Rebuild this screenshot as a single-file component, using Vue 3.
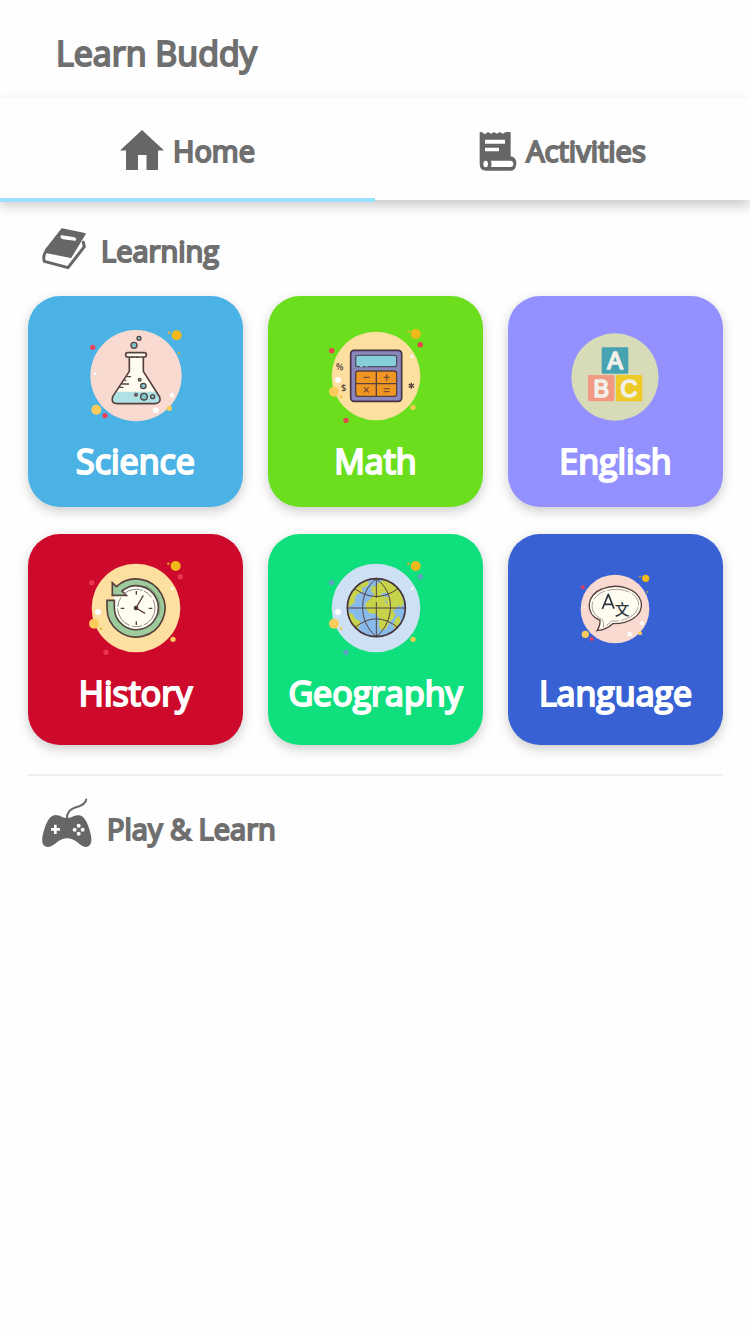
<script setup>
import { ref } from 'vue'

const tab = ref('home')
const subjects = [
  { id: 'science', name: 'Science' },
  { id: 'math', name: 'Math' },
  { id: 'english', name: 'English' },
  { id: 'history', name: 'History' },
  { id: 'geography', name: 'Geography' },
  { id: 'language', name: 'Language' },
]
</script>

<template>
  <div class="app">
    <header class="top"><h1>Learn Buddy</h1></header>

    <nav class="tabs">
      <button type="button" class="tab" :class="{ active: tab === 'home' }" @click="tab = 'home'">
        <svg class="tab-icon home" viewBox="0 0 44 40" aria-hidden="true">
          <path d="M22 0 L44 20.500 H38 V40 H26.500 V25 H18 V40 H6 V20.500 H0 Z" fill="#666" />
        </svg>
        <span>Home</span>
      </button>
      <button type="button" class="tab" :class="{ active: tab === 'activities' }" @click="tab = 'activities'">
        <svg class="tab-icon scroll" viewBox="0 0 114 120" aria-hidden="true">
          <path d="M2 4 L8 3 Q10 3 12 6 Q15 9 19 9 Q23 8 25 4 Q30 3 32 6 Q37 11 43 4 Q47 3 49 5 Q54 11 60 4 Q64 3 67 5 Q71 10 76 5 Q79 3 83 3 L95 3 V76 Q112 78 112 98 Q110 119 96 119 H22 Q2 119 2 98 Z" fill="#666" />
          <path d="M18 26 H78 V38 H18 Z M18 50 H60 V61 H18 Z" fill="#fefefe" />
          <ellipse cx="20" cy="99" rx="7" ry="10" fill="#fefefe" />
          <path d="M36 89 H94 Q103 90 103 99 Q103 108 94 108 H36 Q39 99 36 89 Z" fill="#fefefe" />
        </svg>
        <span>Activities</span>
      </button>
    </nav>

    <main>
      <section>
        <h2 class="heading">
          <svg class="book" viewBox="0 0 132 126" aria-hidden="true">
            <path d="M60 4 L128 18 L86 87 L12 72 Q10 66 16 60 Z" fill="#666" stroke="#666" stroke-width="6" stroke-linejoin="round" />
            <path d="M58 23 L98 29 Q104 32 100 37 L62 32 Q53 28 58 23 Z" fill="#fefefe" stroke="#fefefe" stroke-width="3" />
            <path d="M12 70 Q2 84 7 100 L78 119 L127 56 L124 43" fill="none" stroke="#666" stroke-width="9" stroke-linejoin="round" stroke-linecap="round" />
          </svg>
          <span>Learning</span>
        </h2>

        <div class="grid">
          <button v-for="s in subjects" :key="s.id" type="button" class="card" :class="s.id">
            <svg v-if="s.id === 'science'" class="art" viewBox="0 0 360 330" aria-hidden="true">
              <circle cx="180" cy="167" r="137" fill="#f9dad1" />
              <circle cx="302" cy="46" r="15" fill="#f0b818" /><circle cx="280" cy="38" r="4" fill="#d7b13c" />
              <circle cx="309" cy="100" r="4" fill="#b8b35a" /><circle cx="50" cy="82" r="8" fill="#e9425f" />
              <circle cx="61" cy="269" r="15" fill="#fccb5c" /><circle cx="87" cy="287" r="8" fill="#e9425f" />
              <circle cx="280" cy="265" r="8" fill="#f8cb5d" /><circle cx="57" cy="161" r="4" fill="#fff" />
              <circle cx="288" cy="226" r="7" fill="#fff" /><circle cx="239" cy="271" r="9" fill="#fff" />
              <path d="M160 109 V154 L110 230 Q104 251 124 251 H238 Q256 249 251 231 L202 154 V109 Z" fill="#fffdf0" />
              <path d="M123 215 H240 L251 232 Q254 251 238 251 H124 Q104 248 110 231 Z" fill="#b0e1e5" />
              <path d="M160 109 V154 L110 230 Q104 251 124 251 H238 Q256 249 251 231 L202 154 V109" class="ink heavy" />
              <rect x="149" y="98" width="62" height="13" rx="6" fill="#fffdf0" class="line heavy" />
              <path d="M167 112 H174 M181 112 H187 M153 170 H165 M145 181 H151 M137 192 H159 M129 202 H142" class="ink" />
              <g fill="#79c7cd" class="line">
                <circle cx="189" cy="55" r="6" /><circle cx="174" cy="76" r="9" /><circle cx="191" cy="179" r="4" />
                <circle cx="202" cy="198" r="8" /><circle cx="180" cy="224" r="4" /><circle cx="204" cy="230" r="10" /><circle cx="230" cy="230" r="6" />
              </g>
            </svg>

            <svg v-else-if="s.id === 'math'" class="art" viewBox="0 0 360 330" aria-hidden="true">
              <circle cx="180" cy="168" r="133" fill="#fddf9f" />
              <circle cx="299" cy="42" r="15" fill="#f0b818" /><circle cx="277" cy="35" r="4" fill="#dfb62d" />
              <circle cx="313" cy="74" r="8" fill="#e9424f" /><circle cx="47" cy="92" r="8" fill="#e9424f" />
              <circle cx="90" cy="301" r="8" fill="#e9424f" /><circle cx="291" cy="262" r="8" fill="#f1cc4e" />
              <circle cx="54" cy="215" r="15" fill="#fccb5c" /><circle cx="75" cy="230" r="4" fill="#efbf35" />
              <circle cx="66" cy="180" r="9" fill="#fff" /><circle cx="288" cy="110" r="4" fill="#fff" />
              <rect x="104" y="91" width="153" height="153" rx="10" fill="#8986bb" stroke="#473345" stroke-width="5" />
              <rect x="119" y="106" width="123" height="34" rx="6" fill="#87cfd8" stroke="#4b5263" stroke-width="4" />
              <rect x="119" y="153" width="123" height="76" rx="8" fill="#ef9722" class="line" />
              <path d="M181 153 V229 M119 191 H242" class="ink" />
              <path d="M142 172 H161 M203 172 H221 M212 163 V182 M144 202 L158 217 M158 202 L144 217 M203 206 H221 M203 215 H221" class="ink soft" />
              <path d="M132 139 H140 M149 139 H154" stroke="#a5dfe4" stroke-width="3" />
              <text x="59" y="150" class="mark" transform="rotate(8 70 140)">%</text>
              <text x="75" y="214" class="mark">$</text>
              <path d="M286 188 V206 M278 192 L294 202 M278 202 L294 192" class="ink" />
            </svg>

            <svg v-else-if="s.id === 'english'" class="art" viewBox="0 0 360 330" aria-hidden="true">
              <circle cx="177" cy="171" r="131" fill="#d8dbb8" />
              <rect x="137" y="82" width="80" height="79" rx="4" fill="#47a2b1" />
              <rect x="96" y="165" width="79" height="79" rx="3" fill="#f19983" />
              <rect x="180" y="165" width="79" height="79" rx="3" fill="#edc929" />
              <g class="block"><text x="177" y="146">A</text><text x="136" y="230">B</text><text x="219" y="231">C</text></g>
            </svg>

            <svg v-else-if="s.id === 'history'" class="art" viewBox="0 0 360 330" aria-hidden="true">
              <circle cx="180" cy="168" r="133" fill="#fddf9f" />
              <circle cx="299" cy="42" r="15" fill="#f0b818" /><circle cx="277" cy="35" r="4" fill="#df8a20" />
              <circle cx="313" cy="74" r="8" fill="#eb344f" /><circle cx="47" cy="92" r="8" fill="#eb344f" />
              <circle cx="90" cy="301" r="8" fill="#eb344f" /><circle cx="291" cy="262" r="8" fill="#fccb5c" />
              <circle cx="54" cy="215" r="15" fill="#fccb5c" /><circle cx="75" cy="230" r="4" fill="#efbf35" />
              <circle cx="66" cy="180" r="9" fill="#fff" /><circle cx="288" cy="110" r="4" fill="#fff" />
              <circle cx="181" cy="168" r="74" fill="#fffef3" />
              <path d="M93 145 H115 V168 A66 66 0 1 0 138 117 L151 130 H109 V92 L121 104 A87 87 0 1 1 93 168 Z" fill="#9ecb9b" class="line heavy" />
              <circle cx="181" cy="168" r="56" fill="none" stroke="#928580" stroke-width="3" stroke-dasharray="65 5 30 8" />
              <path d="M207 101 A71 71 0 0 1 248 191" fill="none" stroke="#6e7f66" stroke-width="2" />
              <path d="M181 117 V128 M181 208 V219 M134 169 H145 M218 169 H229 M180 168 L202 130 M180 168 L207 184" class="ink" />
              <circle cx="180" cy="168" r="7" fill="#4e3534" />
            </svg>

            <svg v-else-if="s.id === 'geography'" class="art" viewBox="0 0 360 330" aria-hidden="true">
              <circle cx="180" cy="168" r="133" fill="#cee0f4" />
              <circle cx="299" cy="42" r="15" fill="#f0b818" /><circle cx="277" cy="35" r="4" fill="#b3b536" />
              <circle cx="313" cy="74" r="8" fill="#619fc3" /><circle cx="47" cy="92" r="8" fill="#619fc3" />
              <circle cx="90" cy="301" r="8" fill="#619fc3" /><circle cx="291" cy="262" r="8" fill="#f1cc4e" />
              <circle cx="54" cy="215" r="15" fill="#fccb5c" /><circle cx="75" cy="230" r="4" fill="#e7c84b" />
              <circle cx="66" cy="180" r="9" fill="#fff" /><circle cx="288" cy="110" r="4" fill="#fff" />
              <circle cx="181" cy="167" r="87" fill="#88baeb" />
              <g fill="#c6d34b">
                <path d="M98 145 Q106 106 151 87 L160 92 L151 104 L137 107 L141 119 L126 125 L116 137 L117 149 L106 160 L96 168 Z" />
                <path d="M96 181 L111 187 L117 200 L132 207 L132 219 L124 232 Q99 208 96 181 Z" />
                <path d="M149 153 L166 138 L174 126 L164 116 L177 105 L188 92 L204 84 Q239 94 253 120 L264 151 L256 166 L248 160 L240 171 L229 176 L239 186 L231 201 L219 212 L211 230 L195 235 L188 221 L190 201 L181 185 L161 184 L148 168 Z" />
                <path d="M240 199 L251 192 L253 210 L237 231 L231 222 Z" /><circle cx="171" cy="107" r="6" />
              </g>
              <path d="M194 126 Q208 119 217 125 L221 136 L204 134 Z M204 140 L216 153 L212 157 Z" fill="#88baeb" />
              <path d="M94 168 H268 M181 81 V138 M181 150 V254 M181 81 C129 117 123 207 181 254 C237 208 238 119 181 81 M116 110 Q181 157 246 110 M116 227 Q181 174 246 227" class="ink thin" />
              <circle cx="181" cy="167" r="87" fill="none" stroke="#473338" stroke-width="5" />
            </svg>

            <svg v-else class="art" viewBox="0 0 360 330" aria-hidden="true">
              <circle cx="177" cy="171" r="103" fill="#f9dad1" />
              <circle cx="269" cy="79" r="11" fill="#f0b818" /><circle cx="252" cy="74" r="3" fill="#bca543" />
              <circle cx="274" cy="120" r="3" fill="#b0a44d" /><circle cx="80" cy="106" r="6" fill="#d73b64" />
              <circle cx="88" cy="247" r="11" fill="#fccb5c" /><circle cx="107" cy="261" r="6" fill="#e9425f" />
              <circle cx="252" cy="244" r="6" fill="#f8cb5d" /><circle cx="85" cy="165" r="3" fill="#fff" />
              <circle cx="258" cy="214" r="6" fill="#fff" /><circle cx="221" cy="247" r="7" fill="#fff" />
              <path d="M132 205 C84 186 92 127 138 111 C187 91 246 110 256 151 C261 192 218 216 170 215 Q153 232 123 236 Q133 222 132 205 Z" fill="#fffdf0" class="line" />
              <path d="M139 203 C95 183 100 136 142 119 C184 103 234 116 246 146 C257 184 210 211 167 207 Q155 220 142 225 Q145 213 139 203" fill="none" stroke="#a89c98" stroke-width="3" stroke-dasharray="68 8 42 6" />
              <path d="M139 171 L157 127 L174 170 M145 157 H168" class="ink glyph" />
              <text x="198" y="188" class="han">文</text>
            </svg>
            <span>{{ s.name }}</span>
          </button>
        </div>
      </section>

      <section class="play">
        <h2 class="heading">
          <svg class="pad" viewBox="0 0 150 150" aria-hidden="true">
            <path d="M75 61 Q74 38 98 29 Q133 20 133 2" fill="none" stroke="#666" stroke-width="6" />
            <path d="M40 51 Q52 51 62 58 Q75 62 88 58 Q99 50 113 52 Q128 54 139 85 Q155 130 143 142 Q130 154 109 135 Q93 121 75 121 Q58 121 42 135 Q19 154 5 142 Q-7 130 12 79 Q23 52 40 51 Z" fill="#666" />
            <path d="M36 80 H44 V90 H54 V98 H44 V108 H36 V98 H27 V90 H36 Z" fill="#fefefe" />
            <circle cx="110" cy="83" r="6" fill="#fefefe" /><circle cx="110" cy="107" r="6" fill="#fefefe" />
            <circle cx="98" cy="95" r="6" fill="#fefefe" /><circle cx="122" cy="95" r="6" fill="#fefefe" />
          </svg>
          <span>Play &amp; Learn</span>
        </h2>
      </section>
    </main>
  </div>
</template>

<style>
body {
  background: #fefefe;
}
</style>

<style scoped>
.app {
  color: #6f6f6f;
  font-family: "Open Sans", "Noto Sans", sans-serif;
  -webkit-text-stroke: 2px currentColor;
}
h1,
h2 {
  margin: 0;
  font-weight: 400;
}
button {
  border: 0;
  padding: 0;
  color: inherit;
  font: inherit;
  cursor: pointer;
  -webkit-text-stroke: inherit;
}
.top {
  padding: 29px 56px 21px;
}
h1 {
  font-size: 34px;
  line-height: 48px;
}
.tabs {
  display: flex;
  background: #fefefe;
  box-shadow: 0 6px 12px rgba(0, 0, 0, 0.2);
}
.tab {
  flex: 1;
  display: flex;
  align-items: center;
  justify-content: center;
  gap: 9px;
  height: 102px;
  padding-top: 4px;
  background: none;
  font-size: 29px;
  line-height: 40px;
}
.tab.active {
  box-shadow: inset 0 -4px #9be0fd;
  height: 104px;
  margin-bottom: -2px;
  padding-bottom: 2px;
}
.tab-icon {
  display: block;
}
.home {
  width: 44px;
  height: 40px;
  margin-bottom: 2px;
}
.scroll {
  width: 38px;
  height: 40px;
}
main {
  padding: 28px 27px 0 28px;
}
.heading {
  display: flex;
  align-items: center;
  padding-left: 14px;
  font-size: 29px;
  line-height: 40px;
}
.book {
  width: 44px;
  height: 42px;
  margin: 0 15px 4px 0;
}
.grid {
  display: grid;
  grid-template-columns: repeat(3, 1fr);
  gap: 27px 25px;
  margin-top: 22px;
}
.card {
  display: flex;
  flex-direction: column;
  align-items: center;
  height: 211px;
  padding-top: 24px;
  border-radius: 32px;
  box-shadow: 0 4px 12px rgba(0, 0, 0, 0.2);
  color: #fff;
  font-size: 34px;
  line-height: 48px;
}
.science { background: #4ab2e4; }
.math { background: #6bdf1e; }
.english { background: #9391ff; }
.history { background: #cd0a2c; }
.geography { background: #10df7d; }
.language { background: #3861d3; }
.history,
.geography,
.language {
  padding-top: 18px;
}
.art {
  width: 120px;
  height: 110px;
  margin-bottom: 7px;
  flex: none;
}
.ink,
.line {
  stroke: #56413f;
  stroke-width: 4;
}
.ink {
  fill: none;
  stroke-linejoin: round;
}
.heavy {
  stroke-width: 5;
}
.thin {
  stroke-width: 3;
}
.soft {
  stroke: #7d4f30;
}
.glyph {
  stroke: #2d3440;
  stroke-width: 5;
}
.art text {
  -webkit-text-stroke: 0;
}
.mark {
  fill: #56413f;
  font: 600 28px "Open Sans", sans-serif;
}
.block text {
  fill: #f1f1ea;
  stroke: #f1f1ea;
  stroke-width: 5;
  stroke-linejoin: round;
  font: 400 70px "Liberation Sans", sans-serif;
  text-anchor: middle;
}
.han {
  fill: #2d3440;
  font: 500 44px "Noto Sans CJK SC", sans-serif;
  text-anchor: middle;
}
.play {
  margin-top: 29px;
  padding-top: 21px;
  border-top: 2px solid #eee;
}
.pad {
  width: 50px;
  height: 50px;
  margin-right: 15px;
}
.play .heading span {
  padding-top: 12px;
}
</style>
